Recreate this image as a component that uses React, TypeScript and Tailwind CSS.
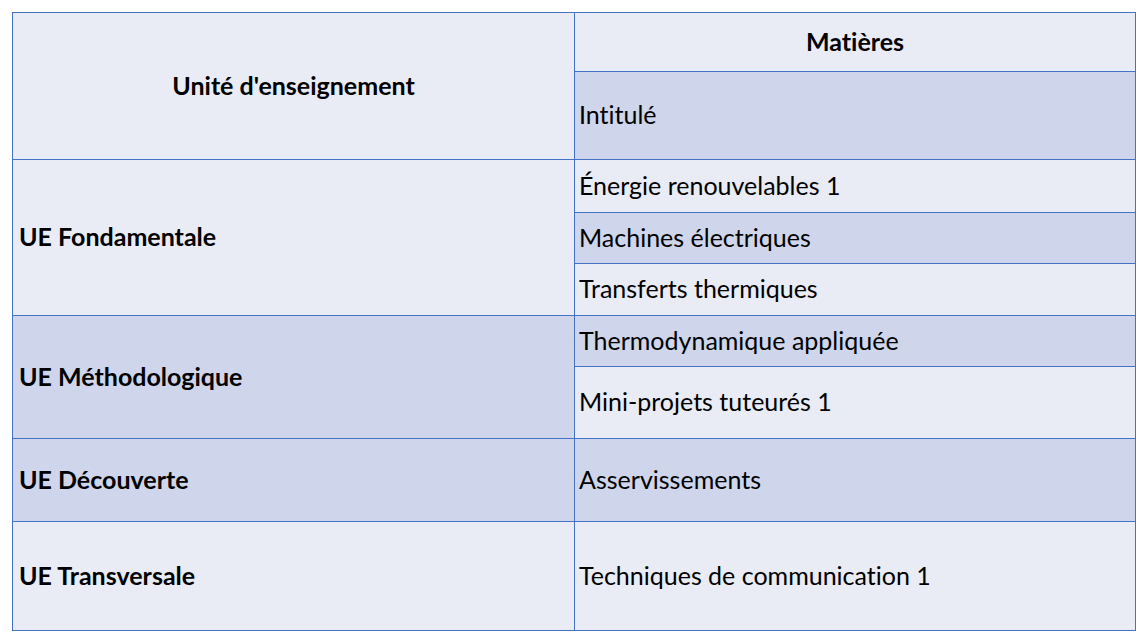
import React from "react";

const L = "bg-[#e9ebf5] pb-[2px]";
const D = "bg-[#cfd5ea] pb-[2px]";

export default function App() {
  return (
    <div className="w-[1147px] h-[642px] bg-white pt-[12px] pl-[12px]" style={{ fontFamily: "Lato, 'Open Sans', sans-serif" }}>
      <div className="grid w-[1124px] grid-cols-[561px_560px] grid-rows-[58px_87px_52px_50px_51px_50px_71px_82px_108px] gap-px bg-[#4472c4] p-px text-[25px] leading-none text-black [font-variant-ligatures:none]">
        <div className={`${L} row-span-2 flex items-center justify-center font-bold`}>Unité d'enseignement</div>
        <div className={`${L} flex items-center justify-center font-bold`}>Matières</div>
        <div className={`${D} flex items-center pl-[4px]`}>Intitulé</div>

        <div className={`${L} row-span-3 flex items-center pl-[6px] font-bold`}>UE Fondamentale</div>
        <div className={`${L} flex items-center pl-[4px]`}>Énergie renouvelables 1</div>
        <div className={`${D} flex items-center pl-[4px]`}>Machines électriques</div>
        <div className={`${L} flex items-center pl-[4px]`}>Transferts thermiques</div>

        <div className={`${D} row-span-2 flex items-center pl-[6px] font-bold`}>UE Méthodologique</div>
        <div className={`${D} flex items-center pl-[4px]`}>Thermodynamique appliquée</div>
        <div className={`${L} flex items-center pl-[4px]`}>Mini-projets tuteurés 1</div>

        <div className={`${D} flex items-center pl-[6px] font-bold`}>UE Découverte</div>
        <div className={`${D} flex items-center pl-[4px]`}>Asservissements</div>

        <div className={`${L} flex items-center pl-[6px] font-bold`}>UE Transversale</div>
        <div className={`${L} flex items-center pl-[4px]`}>Techniques de communication 1</div>
      </div>
    </div>
  );
}
